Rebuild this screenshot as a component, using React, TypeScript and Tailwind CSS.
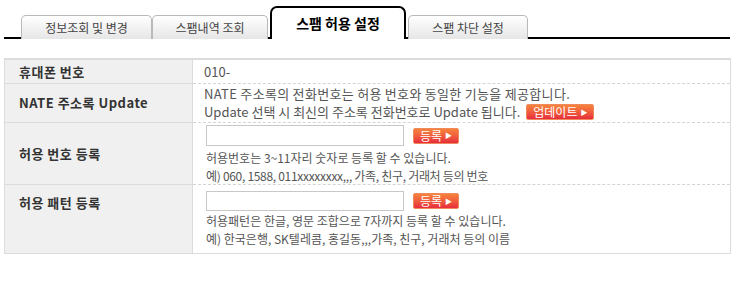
import React from "react";

const font = { fontFamily: '"Noto Sans CJK KR", "Noto Sans", sans-serif' };

function Tab({ label, w }: { label: string; w: string }) {
  return (
    <div
      className={`${w} h-[24px] flex items-center justify-center rounded-t-[5px] border border-b-0 border-[#b9b9b9] bg-gradient-to-b from-white to-[#e6e6e6] text-[12px] text-[#444]`}
    >
      {label}
    </div>
  );
}

function RedButton({ label, w }: { label: string; w: string }) {
  return (
    <button
      className={`${w} h-[16px] flex items-center justify-center gap-[3px] rounded-[2px] border border-[#f08a5a] bg-gradient-to-b from-[#f6823c] to-[#e72a3d] text-white text-[12px] leading-none`}
    >
      <span>{label}</span>
      <span className="text-[7px]">▶</span>
    </button>
  );
}

export default function App() {
  return (
    <div className="w-[738px] h-[281px] bg-white" style={font}>
      <div className="pt-[7px] pl-[4px]">
        <div className="w-[726px] h-[32px] border-b-2 border-black flex items-end pl-[17px] gap-[2px]">
          <div className="flex items-end mb-[-2px]">
            <Tab label="정보조회 및 변경" w="w-[131px]" />
            <Tab label="스팸내역 조회" w="w-[116px]" />
          </div>
          <div className="w-[136px] h-[33px] mb-[-2px] border-2 border-b-0 border-black rounded-t-[7px] bg-white flex items-center justify-center text-[14px] font-bold text-black">
            스팸 허용 설정
          </div>
          <div className="flex items-end mb-[-2px]">
            <Tab label="스팸 차단 설정" w="w-[120px]" />
          </div>
        </div>
      </div>

      <div className="ml-[4px] mt-[19px] w-[727px] border-t-2 border-x border-b border-[#dcdcdc] grid grid-cols-[188px_1fr] text-[12px] text-[#555]">
        {/* row 1 */}
        <div className="h-[24px] bg-[#f0f0f0] border-r border-b border-[#dcdcdc] flex items-center pl-[14px] text-[13px] font-bold tracking-[0.5px] text-[#333]">
          휴대폰 번호
        </div>
        <div className="h-[24px] border-b border-dashed border-[#d4d4d4] flex items-center pl-[11px] text-[13px]">
          010-
        </div>

        {/* row 2 */}
        <div className="h-[39px] bg-[#f0f0f0] border-r border-b border-[#dcdcdc] flex items-center pl-[14px] text-[13px] font-bold tracking-[0.5px] text-[#333]">
          NATE 주소록 Update
        </div>
        <div className="h-[39px] border-b border-dashed border-[#d4d4d4] flex flex-col justify-center pl-[11px] leading-[18px] text-[13px]">
          <div className="tracking-[0.3px]">NATE 주소록의 전화번호는 허용 번호와 동일한 기능을 제공합니다.</div>
          <div className="flex items-center gap-[6px]">
            <span>Update 선택 시 최신의 주소록 전화번호로 Update 됩니다.</span>
            <RedButton label="업데이트" w="w-[68px]" />
          </div>
        </div>

        {/* row 3 */}
        <div className="h-[62px] bg-[#f0f0f0] border-r border-b border-[#dcdcdc] flex items-center pl-[14px] text-[13px] font-bold tracking-[0.5px] text-[#333]">
          허용 번호 등록
        </div>
        <div className="h-[62px] border-b border-dashed border-[#d4d4d4] pl-[13px] pt-[2px] leading-[18px]">
          <div className="flex items-center gap-[9px]">
            <input className="w-[198px] h-[21px] border border-[#c8c8c8] bg-white" />
            <RedButton label="등록" w="w-[46px]" />
          </div>
          <div className="mt-[3px]">허용번호는 3~11자리 숫자로 등록 할 수 있습니다.</div>
          <div className="tracking-[-0.3px]">예) 060, 1588, 011xxxxxxxx,,, 가족, 친구, 거래처 등의 번호</div>
        </div>

        {/* row 4 */}
        <div className="h-[68px] bg-[#f0f0f0] border-r border-[#dcdcdc] pl-[14px] pt-[8px] text-[13px] font-bold tracking-[0.5px] text-[#333]">
          허용 패턴 등록
        </div>
        <div className="h-[68px] pl-[13px] pt-[6px] leading-[18px]">
          <div className="flex items-center gap-[9px]">
            <input className="w-[198px] h-[20px] border border-[#c8c8c8] bg-white" />
            <RedButton label="등록" w="w-[46px]" />
          </div>
          <div className="mt-[1px]">허용패턴은 한글, 영문 조합으로 7자까지 등록 할 수 있습니다.</div>
          <div>예) 한국은행, SK텔레콤, 홍길동,,,가족, 친구, 거래처 등의 이름</div>
        </div>
      </div>
    </div>
  );
}
